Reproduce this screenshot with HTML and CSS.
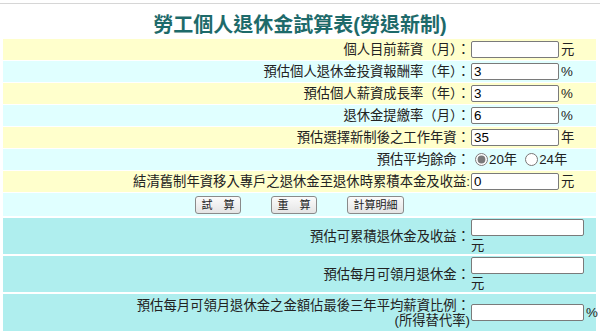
FILE: index.html
```html
<!DOCTYPE html>
<html lang="zh-Hant">
<head>
<meta charset="utf-8">
<title>勞工個人退休金試算表</title>
<link rel="stylesheet" href="styles.css">
</head>
<body>
<div class="topline"></div>
<h1 class="title">勞工個人退休金試算表(勞退新制)</h1>
<div class="sheet">
  <div class="row yellow">
    <div class="label">個人目前薪資（月）：</div>
    <div class="field"><input class="num" type="text" value=""><span class="unit">元</span></div>
  </div>
  <div class="row cyan">
    <div class="label">預估個人退休金投資報酬率（年）：</div>
    <div class="field"><input class="num" type="text" value="3"><span class="unit">%</span></div>
  </div>
  <div class="row yellow">
    <div class="label">預估個人薪資成長率（年）：</div>
    <div class="field"><input class="num" type="text" value="3"><span class="unit">%</span></div>
  </div>
  <div class="row cyan">
    <div class="label">退休金提繳率（月）：</div>
    <div class="field"><input class="num" type="text" value="6"><span class="unit">%</span></div>
  </div>
  <div class="row yellow">
    <div class="label">預估選擇新制後之工作年資：</div>
    <div class="field"><input class="num" type="text" value="35"><span class="unit">年</span></div>
  </div>
  <div class="row cyan">
    <div class="label">預估平均餘命：</div>
    <div class="field">
      <label class="opt"><input class="radio" type="radio" name="life" checked>20年</label>
      <label class="opt"><input class="radio" type="radio" name="life">24年</label>
    </div>
  </div>
  <div class="row yellow">
    <div class="label">結清舊制年資移入專戶之退休金至退休時累積本金及收益:</div>
    <div class="field"><input class="num" type="text" value="0"><span class="unit">元</span></div>
  </div>
  <div class="actions cyan">
    <button class="btn" type="button">試　算</button>
    <button class="btn" type="button">重　算</button>
    <button class="btn" type="button">計算明細</button>
  </div>
  <div class="row tall teal gap2">
    <div class="label">預估可累積退休金及收益：</div>
    <div class="field stack"><input class="num wide" type="text" value=""><span class="unit-below">元</span></div>
  </div>
  <div class="row tall teal gap2">
    <div class="label">預估每月可領月退休金：</div>
    <div class="field stack"><input class="num wide" type="text" value=""><span class="unit-below">元</span></div>
  </div>
  <div class="row taller teal gap2">
    <div class="label">預估每月可領月退休金之金額佔最後三年平均薪資比例：<br>(所得替代率)</div>
    <div class="field"><input class="num wide" type="text" value=""><span class="unit">%</span></div>
  </div>
</div>
</body>
</html>
```
FILE: styles.css
```css
body {
  margin: 0;
  background: #ffffff;
  color: #222222;
  font-family: "Liberation Sans", "Noto Sans CJK TC", sans-serif;
}

.topline {
  margin-top: 3px;
  border-top: 1px solid #d6d6d6;
}

.title {
  margin: 9px 0 2px;
  text-align: center;
  font-size: 20px;
  line-height: 24px;
  font-weight: bold;
  color: #1d6a6a;
}

.sheet {
  margin-left: 3px;
  width: 593px;
  display: flex;
  flex-direction: column;
  gap: 1px;
  font-size: 13.33px;
}

.row {
  display: grid;
  grid-template-columns: 467px 1fr;
  height: 21px;
  align-items: center;
}

.row.tall {
  height: 36px;
}

.row.taller {
  height: 37px;
}

.gap2 {
  margin-top: 1px;
}

.label {
  text-align: right;
  white-space: nowrap;
  line-height: 15px;
}

.field {
  display: flex;
  align-items: center;
  padding-left: 1px;
}

.field.stack {
  flex-direction: column;
  align-items: flex-start;
}

.num {
  width: 88px;
  height: 17px;
  box-sizing: border-box;
  margin: 0;
  padding: 0 2px;
  border: 1px solid #7a7a7a;
  border-radius: 2px;
  background: #ffffff;
  color: #000000;
  font: 13.33px "Liberation Sans", sans-serif;
}

.num.wide {
  width: 113px;
}

.unit {
  margin-left: 2px;
  line-height: 15px;
}

.unit-below {
  line-height: 17px;
  margin-top: 1px;
}

.opt {
  display: inline-flex;
  align-items: center;
  line-height: 15px;
}

.opt + .opt {
  margin-left: 4px;
}

.radio {
  width: 13px;
  height: 13px;
  margin: 0 1px 0 4px;
  accent-color: #7a7a7a;
}

.actions {
  height: 23px;
  display: flex;
  justify-content: center;
  align-items: center;
  gap: 30px;
}

.btn {
  height: 18px;
  margin: 0;
  padding: 0 5.5px;
  border: 1px solid #8a8a8a;
  border-radius: 3px;
  background: linear-gradient(#fbfbfb, #e4e4e4);
  color: #222222;
  font: 11px/14px "Liberation Sans", "Noto Sans CJK TC", sans-serif;
}

.yellow {
  background: #ffffcc;
}

.cyan {
  background: #e0ffff;
}

.teal {
  background: #afeeee;
}
```
